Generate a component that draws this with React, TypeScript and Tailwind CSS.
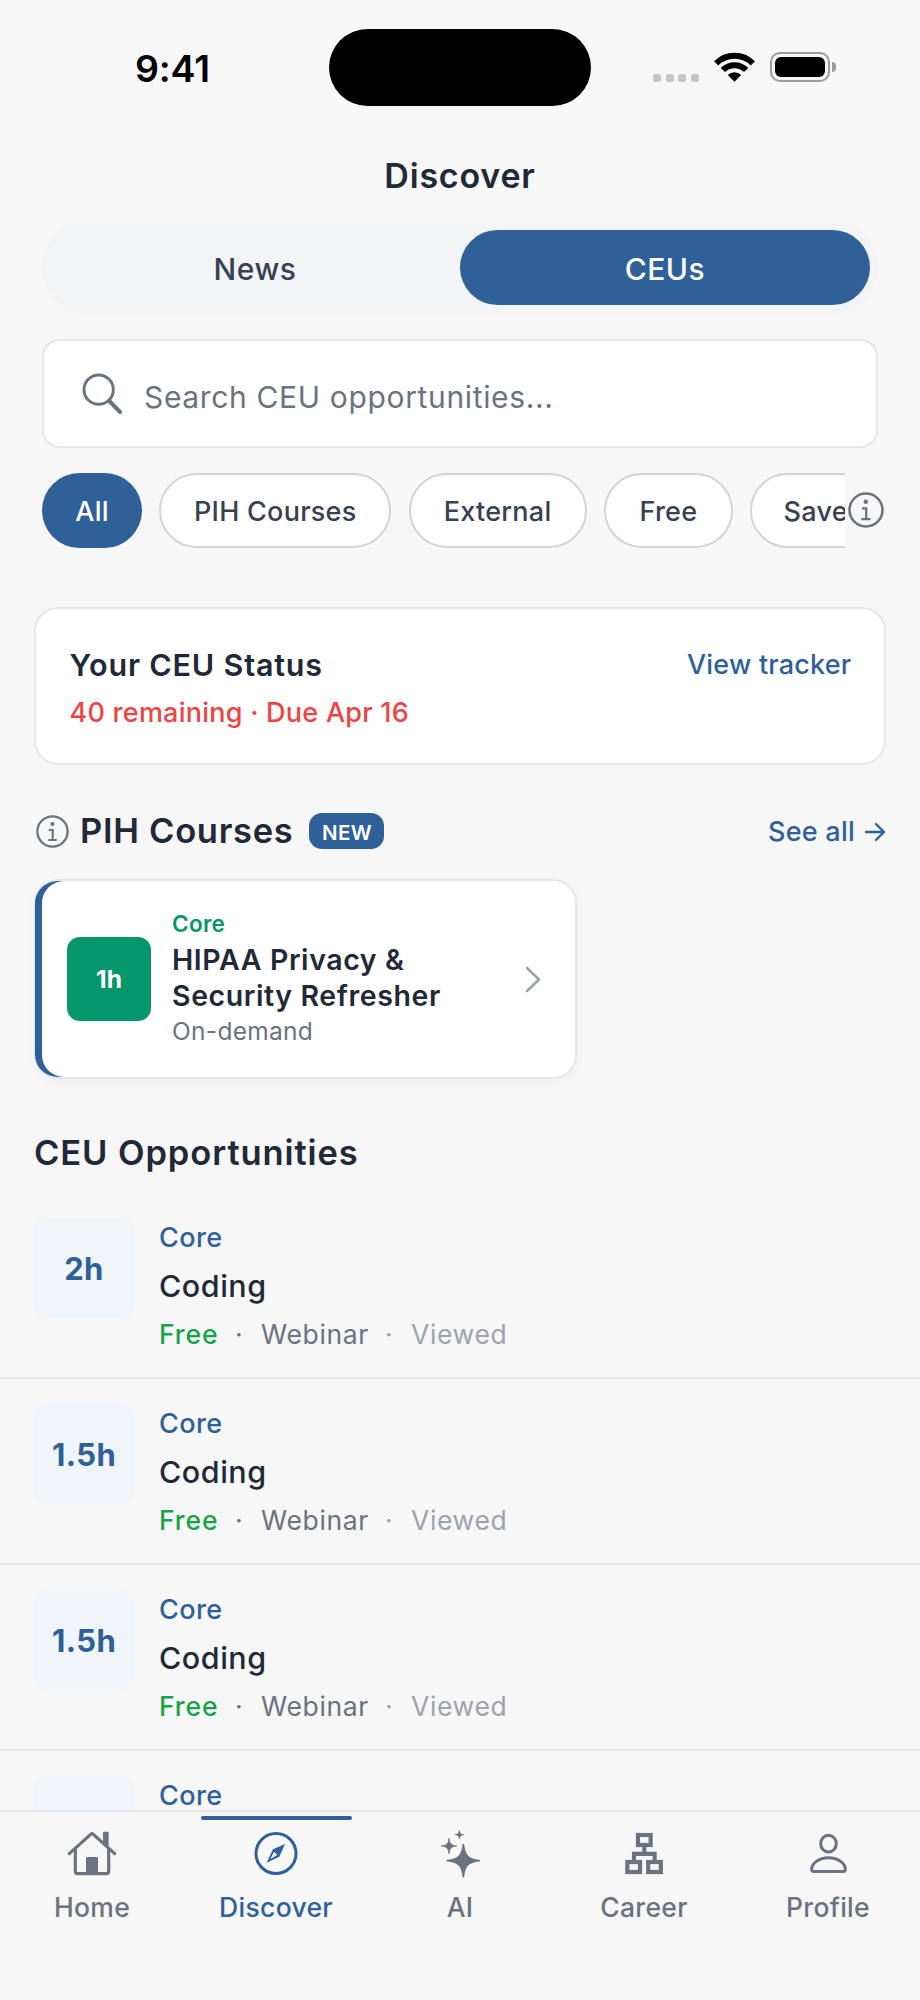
import { useState } from "react";

interface Course {
  id: number;
  hours: string;
  category: string;
  title: string;
  price: string;
  format: string;
}

const courses: Course[] = [
  { id: 1, hours: "2h", category: "Core", title: "Coding", price: "Free", format: "Webinar" },
  { id: 2, hours: "1.5h", category: "Core", title: "Coding", price: "Free", format: "Webinar" },
  { id: 3, hours: "1.5h", category: "Core", title: "Coding", price: "Free", format: "Webinar" },
];

const filters = [
  { label: "All", width: "w-[100px]" },
  { label: "PIH Courses", width: "w-[232px]" },
  { label: "External", width: "w-[178px]" },
  { label: "Free", width: "w-[129px]" },
  { label: "Saved", width: "w-[148px]" },
];

function InfoIcon({ className }: { className?: string }) {
  return (
    <svg viewBox="-18 -18 36 36" className={className} fill="none" stroke="currentColor" strokeWidth="2.5">
      <circle r="16.5" />
      <path d="M-4 -1.7H0.2V9M-4.6 9.2H4.6" strokeWidth="2.3" />
      <circle cx="-0.2" cy="-8.2" r="2.2" fill="currentColor" stroke="none" />
    </svg>
  );
}

function SearchIcon() {
  return (
    <svg viewBox="0 0 123 126" className="h-[42px] w-[41px] shrink-0" fill="none" stroke="currentColor">
      <circle cx="50" cy="50" r="44" strokeWidth="9" />
      <path d="M82 84L114 117" strokeWidth="12" strokeLinecap="round" />
    </svg>
  );
}

function HomeIcon() {
  return (
    <svg viewBox="-78 -78 156 156" className="size-[52px]" fill="none" stroke="currentColor" strokeWidth="9.5">
      <path d="M-68 2L-4 -56Q0 -60 4 -56L68 2" strokeLinecap="round" />
      <path d="M-50 -14V54Q-50 62 -42 62H42Q50 62 50 54V-14" />
      <path d="M33 -60Q33 -64 37 -64H46Q50 -64 50 -60V-16L33 -31Z" fill="currentColor" stroke="none" />
      <path d="M-18 63V16Q-18 12 -14 12H14Q18 12 18 16V63Z" fill="currentColor" stroke="none" />
    </svg>
  );
}

function CompassIcon() {
  return (
    <svg viewBox="-78 -78 156 156" className="size-[52px]">
      <circle cy="1.5" r="60" fill="none" stroke="currentColor" strokeWidth="9" />
      <path
        d="M27 -27L-9 -11L-28 29L10 11ZM-6 -4L4 6L-17 18Z"
        fill="currentColor"
        fillRule="evenodd"
      />
    </svg>
  );
}

function SparklesIcon() {
  const star = "M0 -48C4 -14 14 -4 48 0C14 4 4 14 0 48C-4 14 -14 4 -48 0C-14 -4 -4 -14 0 -48Z";
  return (
    <svg viewBox="-78 -78 156 156" className="size-[52px]" fill="currentColor" stroke="currentColor" strokeWidth="5" strokeLinejoin="round">
      <path d={star} transform="translate(10 23)" />
      <path d={star} transform="translate(-33 -21) scale(.48)" />
      <path d={star} transform="translate(-2 -55) scale(.29)" />
    </svg>
  );
}

function CareerIcon() {
  return (
    <svg viewBox="-78 -78 156 156" className="size-[52px]" fill="none" stroke="currentColor" strokeWidth="12.5">
      <rect x="-18" y="-54" width="38" height="30" />
      <rect x="-50" y="27" width="38" height="30" />
      <rect x="12.5" y="27" width="38" height="30" />
      <path d="M1 -20V3M-30 24V2.5H32V24" />
    </svg>
  );
}

function ProfileIcon() {
  return (
    <svg viewBox="-78 -78 156 156" className="size-[52px]" fill="none" stroke="currentColor" strokeWidth="9">
      <ellipse cx="1.5" cy="-28" rx="23.5" ry="25" />
      <path d="M-49 49C-49 32 -28 14 1.5 14S52 32 52 49Q52 55.5 46 55.5H-43Q-49 55.5 -49 49Z" />
    </svg>
  );
}

const tabs = [
  { name: "Home", icon: HomeIcon },
  { name: "Discover", icon: CompassIcon },
  { name: "AI", icon: SparklesIcon },
  { name: "Career", icon: CareerIcon },
  { name: "Profile", icon: ProfileIcon },
];

function StatusBar() {
  return (
    <div className="flex h-[134px] shrink-0 items-start">
      <div className="mt-[49px] ml-[135px] w-[194px] text-[37.5px] leading-10 font-semibold tracking-[-0.2px] text-black">
        9:41
      </div>
      <div className="mt-[29px] h-[77px] w-[262px] rounded-full bg-black" />
      <div className="mt-[52px] ml-[62px] flex h-[30px] items-end">
        <div className="flex gap-[4.6px]">
          <span className="size-2 rounded-[2.5px] bg-[#c5c5c5]" />
          <span className="size-2 rounded-[2.5px] bg-[#c5c5c5]" />
          <span className="size-2 rounded-[2.5px] bg-[#c5c5c5]" />
          <span className="size-2 rounded-[2.5px] bg-[#c5c5c5]" />
        </div>
        <svg viewBox="-61 -89 122 90" className="ml-[15.5px] h-[30px] w-[41px]" fill="none" stroke="#000" strokeWidth="18">
          <path d="M-55 -55A78 78 0 0 1 55 -55" />
          <path d="M-35 -35A49.5 49.5 0 0 1 35 -35" />
          <path d="M0 0L-20 -20A28 28 0 0 1 20 -20Z" fill="#000" stroke="none" />
        </svg>
        <div className="ml-[15px] flex h-[30px] w-[60px] rounded-[10px] border-2 border-[#9b9b9b] p-[3px]">
          <div className="flex-1 rounded-[6px] bg-black" />
        </div>
        <div className="mb-[10px] ml-[2px] h-[10px] w-[3.5px] rounded-r-full bg-[#9b9b9b]" />
      </div>
    </div>
  );
}

function CourseRow({ course }: { course: Course }) {
  return (
    <div className="flex h-[186px] shrink-0 items-start border-b-2 border-[#e5e7eb] pt-[25px] pl-[34px]">
      <div className="flex size-[100px] items-center justify-center rounded-[14px] bg-[#f0f5f9] pt-[3px] text-[31px] font-bold tracking-[0.4px] text-[#2f6098]">
        {course.hours}
      </div>
      <div className="ml-[25px] flex flex-col gap-2 leading-10">
        <p className="text-[27px] font-medium tracking-[0.4px] text-[#2f6098]">{course.category}</p>
        <p className="text-[30.5px] font-medium tracking-[0.5px] text-[#1f2937]">{course.title}</p>
        <div className="flex text-[26.5px] tracking-[0.65px] text-[#6b7280]">
          <span className="w-[76px] font-medium tracking-[0.9px] text-[#16a34a]">{course.price}</span>
          <span className="w-[26px]">·</span>
          <span className="w-[124px]">{course.format}</span>
          <span className="w-[26px] text-[#9ca3af]">·</span>
          <span className="text-[#9ca3af]">Viewed</span>
        </div>
      </div>
    </div>
  );
}

export default function App() {
  const [section, setSection] = useState("CEUs");
  const [filter, setFilter] = useState("All");
  const [activeTab, setActiveTab] = useState("Discover");

  return (
    <div className="flex h-[2000px] w-[920px] flex-col overflow-hidden bg-[#f7f7f7] font-['Inter','Liberation_Sans',sans-serif]">
      <StatusBar />

      <main className="flex min-h-0 flex-1 flex-col overflow-hidden">
        <h1 className="h-[84px] shrink-0 text-center text-[34px] leading-[84px] font-semibold tracking-[0.8px] text-[#1f2937]">
          Discover
        </h1>

        {/* section switch */}
        <div className="mx-[42px] mt-1 flex h-[91px] shrink-0 rounded-full bg-[#f3f4f6] p-2">
          {["News", "CEUs"].map((name) => (
            <button
              key={name}
              onClick={() => setSection(name)}
              className={`flex-1 cursor-pointer rounded-full pt-1 text-[30px] font-medium tracking-[0.5px] ${
                section === name ? "bg-[#2f6098] text-white" : "text-[#374151]"
              }`}
            >
              {name}
            </button>
          ))}
        </div>

        {/* search */}
        <div className="mx-[42px] mt-[26px] flex h-[109px] shrink-0 items-center rounded-[18px] border-2 border-[#e5e7eb] bg-white pl-[38px] text-[#6b7280]">
          <SearchIcon />
          <span className="mt-2 ml-[21px] text-[30px] tracking-[0.65px]">Search CEU opportunities...</span>
        </div>

        {/* filters */}
        <div className="mt-[25px] ml-[42px] flex h-[75px] shrink-0 items-center">
          <div className="flex w-[803px] gap-[17.3px] overflow-hidden">
            {filters.map((f) => (
              <button
                key={f.label}
                onClick={() => setFilter(f.label)}
                className={`h-[75px] shrink-0 cursor-pointer rounded-full pt-1 text-[27px] font-medium tracking-[0.25px] ${f.width} ${
                  filter === f.label
                    ? "bg-[#2f6098] text-white"
                    : "border-2 border-[#d1d5db] bg-white text-[#374151]"
                }`}
              >
                {f.label}
              </button>
            ))}
          </div>
          <InfoIcon className="mb-[2px] ml-[3px] size-9 text-[#6b7280]" />
        </div>

        {/* status card */}
        <div className="mx-[34px] mt-[59px] h-[158px] shrink-0 rounded-3xl border-2 border-[#e5e7eb] bg-white px-[33.5px] pt-[36px]">
          <div className="flex h-10 items-center justify-between">
            <h2 className="text-[30.5px] font-semibold tracking-[0.8px] text-[#1f2937]">Your CEU Status</h2>
            <a className="-mr-px text-[27px] font-medium tracking-[0.2px] text-[#2f6098]">View tracker</a>
          </div>
          <p className="mt-2 text-[27px] leading-10 font-medium tracking-[0.25px] text-[#ef4444]">
            40 remaining · Due Apr 16
          </p>
        </div>

        {/* PIH courses */}
        <div className="mr-[34px] mt-12 ml-[35px] flex h-9 shrink-0 items-center">
          <InfoIcon className="ml-px size-[33px] text-[#6b7280]" />
          <h2 className="-mt-px ml-[11px] text-[34.5px] font-semibold tracking-[0.7px] text-[#1f2937]">PIH Courses</h2>
          <span className="ml-[16px] flex h-9 w-[75px] items-center justify-center rounded-[13px] bg-[#2f6098] pt-1 text-[20.5px] font-semibold tracking-[0.3px] text-white">
            NEW
          </span>
          <a className="ml-auto flex items-center pt-0.5 text-[27px] font-medium tracking-[0.25px] text-[#2f6098]">
            See all
            <svg viewBox="0 0 22 20" className="ml-[9px] h-5 w-[22px]" fill="none" stroke="currentColor" strokeWidth="2.4">
              <path d="M2 10H19M12 2L20 10L12 18" strokeLinecap="round" strokeLinejoin="round" />
            </svg>
          </a>
        </div>

        {/* blue edge shows through on the left of the white panel */}
        <div className="mt-[30px] ml-[34px] h-[200px] w-[543px] shrink-0 rounded-3xl border-2 border-l border-[#e5e7eb] bg-linear-to-r from-[#2f6098] from-50% to-white to-50% pl-[7px] shadow-[0_3px_8px_rgba(0,0,0,0.04)]">
          <div className="flex h-full items-center rounded-[22px] bg-white">
            <div className="ml-[25px] flex size-[84px] items-center justify-center rounded-[13px] bg-[#059669] text-[24.5px] font-bold text-white">
              1h
            </div>
            <div className="-mt-[3px] ml-[21px] leading-9">
              <p className="text-[22.5px] font-semibold tracking-[0.3px] text-[#059669]">Core</p>
              <p className="text-[28.5px] leading-[35.5px] font-semibold tracking-[0.6px] text-[#1f2937]">
                HIPAA Privacy &<br />
                Security Refresher
              </p>
              <p className="text-[24.5px] tracking-[0.3px] text-[#6b7280]">On-demand</p>
            </div>
            <svg viewBox="0 0 16 26" className="mr-[34px] ml-auto h-[27px] w-4 text-[#9ca3af]" fill="none" stroke="currentColor" strokeWidth="2.6">
              <path d="M2 1.5L14 13L2 24.5" strokeLinecap="round" strokeLinejoin="round" />
            </svg>
          </div>
        </div>

        <h2 className="mt-[54px] ml-[34px] h-10 shrink-0 text-[34.5px] leading-10 font-semibold tracking-[0.9px] text-[#1f2937]">
          CEU Opportunities
        </h2>
        <div className="mt-5 flex flex-col">
          {courses.map((course) => (
            <CourseRow key={course.id} course={course} />
          ))}
          {/* next row, tucked under the tab bar */}
          <div className="flex shrink-0 items-start pt-[25px] pl-[34px]">
            <div className="h-9 w-[100px] rounded-t-[14px] bg-[#f0f5f9]" />
            <p className="ml-[25px] h-[34px] text-[27px] leading-10 font-medium tracking-[0.4px] text-[#2f6098]">Core</p>
          </div>
        </div>
      </main>

      {/* tab bar */}
      <nav className="flex h-[190px] shrink-0 border-t-2 border-[#e5e7eb]">
        {tabs.map(({ name, icon: Icon }) => (
          <button
            key={name}
            onClick={() => setActiveTab(name)}
            className={`flex w-[184px] cursor-pointer flex-col items-center pt-1 ${
              activeTab === name ? "text-[#2f6098]" : "text-[#6b7280]"
            }`}
          >
            <span className={`h-1 w-[151px] rounded-full ${activeTab === name ? "bg-[#2f6098]" : ""}`} />
            <span className="mt-[7px] h-[52px]">
              <Icon />
            </span>
            <span className="mt-2 text-[26.5px] leading-10 font-medium tracking-[0.3px]">{name}</span>
          </button>
        ))}
      </nav>
    </div>
  );
}
